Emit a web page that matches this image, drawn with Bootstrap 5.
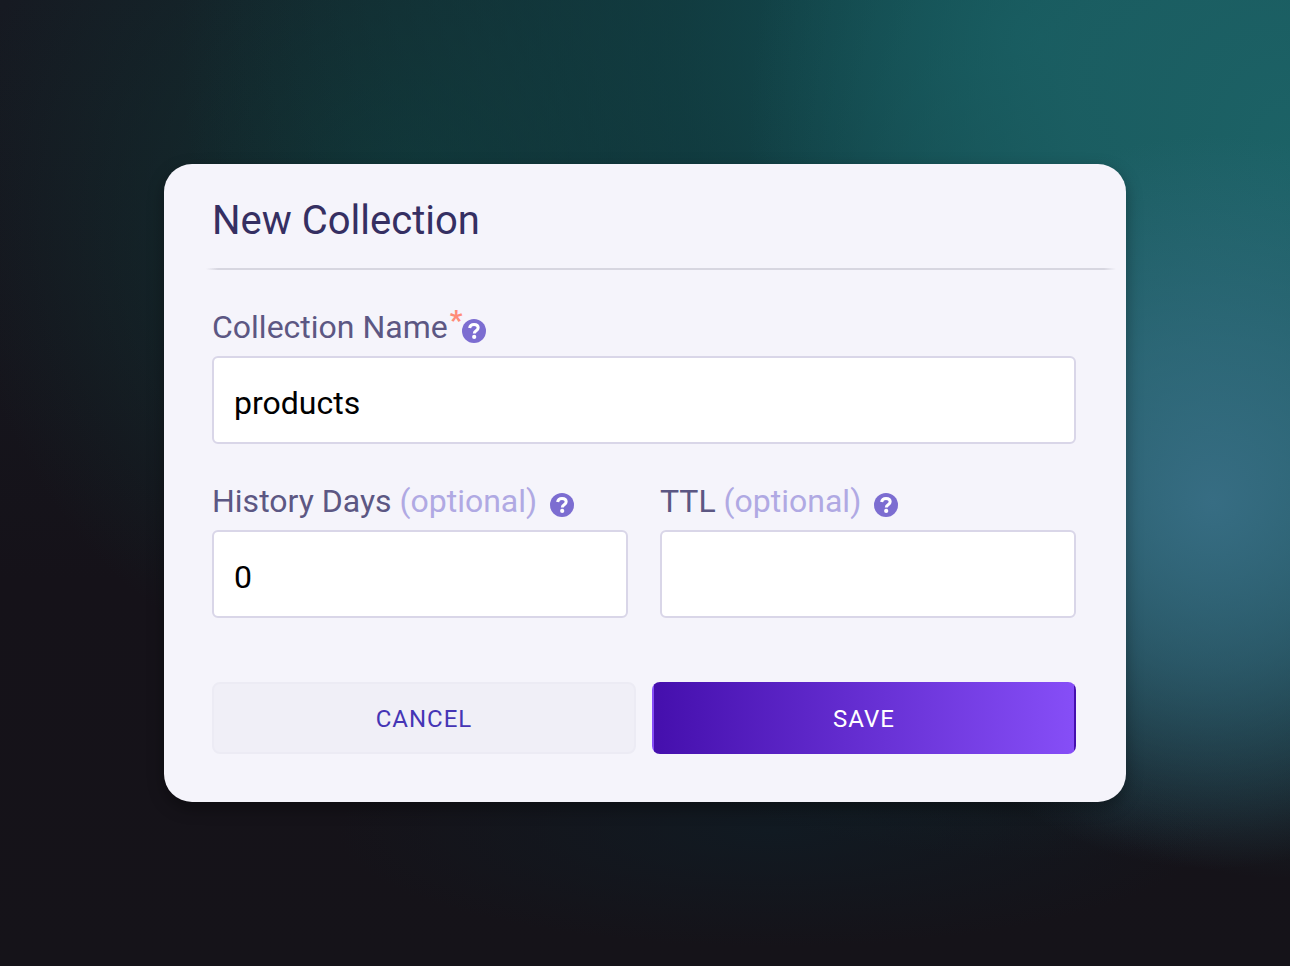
<!DOCTYPE html>
<html lang="en">
<head>
<meta charset="utf-8">
<meta name="viewport" content="width=device-width, initial-scale=1">
<title>New Collection</title>
<link href="https://cdn.jsdelivr.net/npm/bootstrap@5.3.0/dist/css/bootstrap.min.css" rel="stylesheet">
<style>
  body {
    font-family: Roboto, "Liberation Sans", sans-serif;
    background:
      radial-gradient(ellipse 27% 38% at 94% 52%, rgba(58, 112, 136, .9), rgba(58, 112, 136, .55) 45%, rgba(58, 112, 136, 0)),
      radial-gradient(ellipse 42% 75% at 100% 16%, #1c6266 0%, rgba(28, 96, 100, .85) 40%, rgba(28, 96, 100, 0) 100%),
      radial-gradient(ellipse 66% 85% at 80% 4%, #13565a 0%, rgba(16, 68, 72, .75) 42%, rgba(16, 60, 64, 0) 100%),
      radial-gradient(ellipse 35% 50% at 32% 22%, rgba(16, 56, 56, .85), rgba(16, 52, 50, 0)),
      radial-gradient(ellipse 34% 12% at 60% 86%, #111a22, rgba(17, 26, 34, 0)),
      linear-gradient(#161a22, #151219 60%, #151319);
  }
  .dialog {
    max-width: 962px;
    border-radius: 28px;
    background: #f5f4fb;
    box-shadow: 0 6px 16px rgba(0, 0, 0, .35);
  }
  .dialog-head { padding: 33px 50px 23px 48px; }
  .dialog-title { font-size: 40px; line-height: 48px; font-weight: 400; color: #352f62; }
  .rule {
    height: 2px;
    margin: 0 10px 0 42px;
    background: linear-gradient(90deg, transparent, #d7d6e0 12px calc(100% - 12px), transparent);
  }
  .dialog-body { padding: 32px 50px 48px 48px; }
  .field-row { column-gap: 32px; row-gap: 32px; }
  .half { flex: 1 1 240px; min-width: 0; }
  .field-label { height: 48px; margin-bottom: 6px; padding-top: 2px; font-size: 32px; line-height: 48px; color: #5c5783; }
  .optional { color: #b0a9e3; }
  .star { align-self: flex-start; padding-left: 2px; font-size: 28px; line-height: 34px; font-weight: 700; color: #ff8c78; }
  .help { width: 24px; height: 24px; margin-top: 8px; color: #7c6dd1; }
  .optional-help { margin-left: 13px; }
  .help svg { display: block; }
  .field {
    height: 88px;
    padding: 6px 20px 0;
    border: 2px solid #d9d6e8;
    border-radius: 6px;
    font-size: 32px;
    color: #000;
  }
  .actions { margin-top: 64px; }
  .action { height: 72px; padding-top: 8px; border: 2px solid transparent; border-radius: 8px; font-size: 24px; letter-spacing: 1px; }
  .cancel, .cancel:hover { background: #f0eff7; border-color: #ecebf4; color: #4535b5; }
  .save, .save:hover { background: linear-gradient(90deg, #450fad, #864ef7); color: #fff; }
</style>
</head>
<body class="min-vh-100 d-flex align-items-center justify-content-center">
<main class="dialog w-100">
  <header class="dialog-head">
    <h1 class="dialog-title m-0">New Collection</h1>
  </header>
  <div class="rule"></div>
  <form class="dialog-body">
    <div class="d-flex flex-wrap field-row">
      <div class="w-100">
        <div class="field-label d-flex align-items-center">
          <label for="name">Collection Name</label>
          <span class="star">*</span>
          <button type="button" class="help btn p-0 border-0" aria-label="About the collection name">
            <svg width="24" height="24" viewBox="0 0 24 24" aria-hidden="true"><circle cx="12" cy="12" r="12" fill="currentColor"/><path d="M7.600 9C8 6.600 9.700 5.500 12 5.500c2.500 0 4.200 1.300 4.200 3.300 0 3-3.900 2.900-3.900 5.600" fill="none" stroke="#fff" stroke-width="3"/><circle cx="12.200" cy="17.900" r="2.100" fill="#fff"/></svg>
          </button>
        </div>
        <input id="name" type="text" class="form-control field" value="products" required>
      </div>
      <div class="half">
        <div class="field-label d-flex align-items-center">
          <label for="history">History Days <span class="optional">(optional)</span></label>
          <button type="button" class="help optional-help btn p-0 border-0" aria-label="About history days">
            <svg width="24" height="24" viewBox="0 0 24 24" aria-hidden="true"><circle cx="12" cy="12" r="12" fill="currentColor"/><path d="M7.600 9C8 6.600 9.700 5.500 12 5.500c2.500 0 4.200 1.300 4.200 3.300 0 3-3.900 2.900-3.900 5.600" fill="none" stroke="#fff" stroke-width="3"/><circle cx="12.200" cy="17.900" r="2.100" fill="#fff"/></svg>
          </button>
        </div>
        <input id="history" type="text" inputmode="numeric" class="form-control field" value="0">
      </div>
      <div class="half">
        <div class="field-label d-flex align-items-center">
          <label for="ttl">TTL <span class="optional">(optional)</span></label>
          <button type="button" class="help optional-help btn p-0 border-0" aria-label="About TTL">
            <svg width="24" height="24" viewBox="0 0 24 24" aria-hidden="true"><circle cx="12" cy="12" r="12" fill="currentColor"/><path d="M7.600 9C8 6.600 9.700 5.500 12 5.500c2.500 0 4.200 1.300 4.200 3.300 0 3-3.900 2.900-3.900 5.600" fill="none" stroke="#fff" stroke-width="3"/><circle cx="12.200" cy="17.900" r="2.100" fill="#fff"/></svg>
          </button>
        </div>
        <input id="ttl" type="text" inputmode="numeric" class="form-control field">
      </div>
    </div>
    <div class="actions d-flex gap-3">
      <button type="button" class="action cancel btn w-100">CANCEL</button>
      <button type="submit" class="action save btn w-100">SAVE</button>
    </div>
  </form>
</main>
<script src="https://cdn.jsdelivr.net/npm/bootstrap@5.3.0/dist/js/bootstrap.bundle.min.js"></script>
</body>
</html>
